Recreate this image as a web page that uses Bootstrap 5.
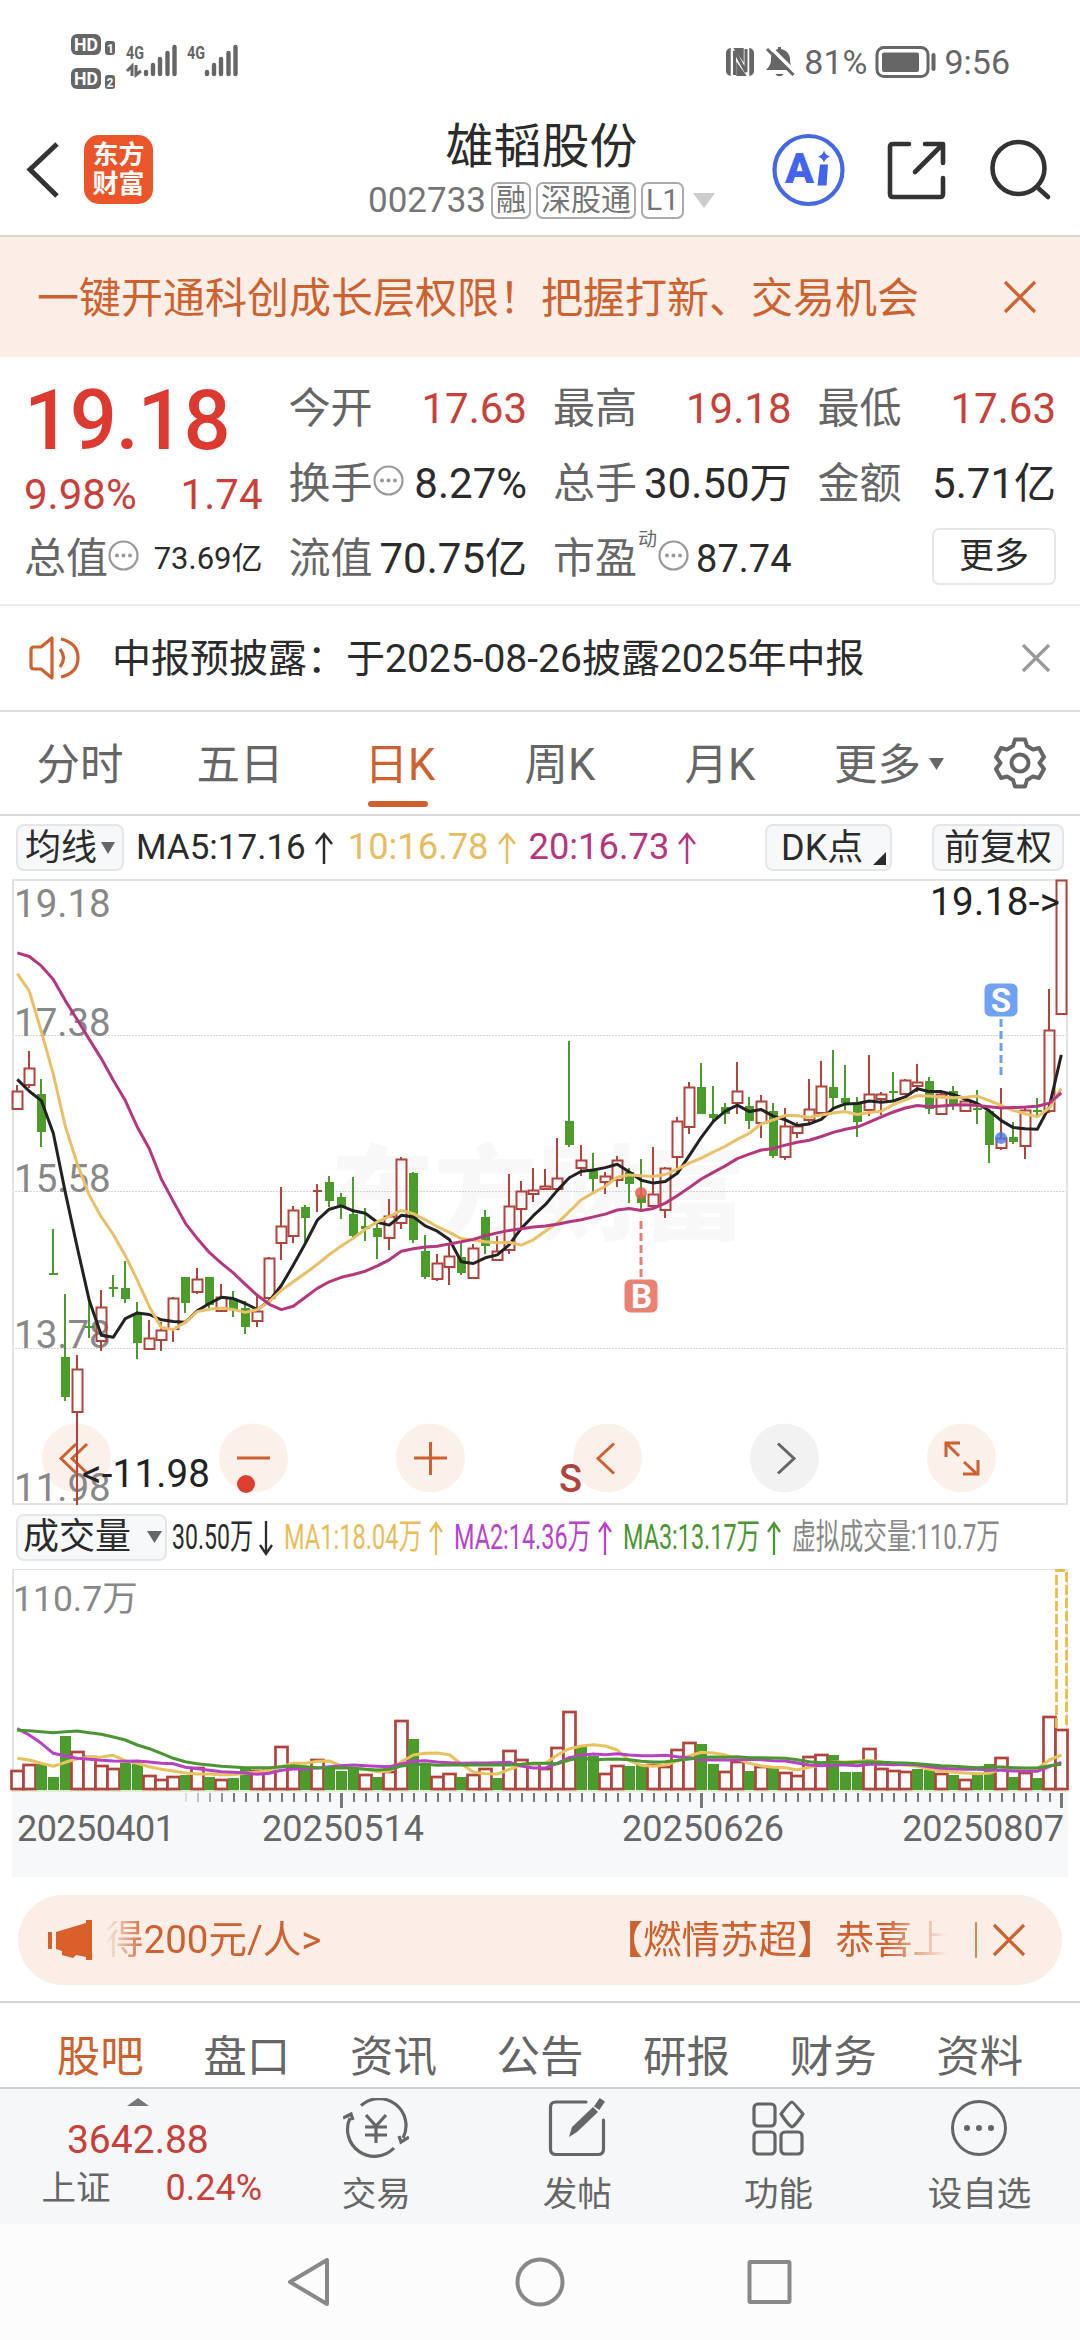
<!DOCTYPE html>
<html lang="zh-CN">
<head>
<meta charset="utf-8">
<meta name="viewport" content="width=device-width, initial-scale=1">
<title>雄韬股份 002733</title>
<link rel="stylesheet" href="https://cdn.jsdelivr.net/npm/bootstrap@5.3.0/dist/css/bootstrap.min.css">
<style>
  :root{--up:#c8403a;--brand:#cd6230;--ink:#2b2b2b;--mute:#666;--soft:#fbeee6}
  html,body{margin:0;background:#fff;overflow-x:hidden}
  body{width:1080px;height:2340px;overflow:hidden;font-family:Roboto,"Noto Sans CJK SC",sans-serif;color:var(--ink);line-height:1;font-size:42px}
  svg{display:block;flex:none}
  svg text{font-family:Roboto,"Noto Sans CJK SC",sans-serif}
  .c-up{color:var(--up)} .c-brand{color:var(--brand)} .c-mute{color:var(--mute)}
  .status-row{height:115px;padding:8px 70px 0 70px;color:#666;font-size:34px}
  .head-row{height:122px;border-bottom:2px solid #d6d6d9;padding-bottom:11px}
  .back-ico{margin-left:26px}
  .app-logo{width:69px;height:69px;border-radius:15px;background:#ea5529;color:#fff;font-size:26px;font-weight:700;line-height:29px}
  .title-box{padding-left:160px}
  .stock-name{font-size:48px;line-height:56px}
  .code-line{font-size:35px;color:#757575;height:40px;margin-top:5px;gap:5px}
  .tag-box{border:2px solid #aaa;border-radius:7px;font-size:30px;height:37px;padding:0 3px;color:#757575}
  .head-icons{margin-right:18px}
  .promo{height:120px;background:var(--soft);padding:0 43px 0 37px}
  .promo span{padding-top:4px}
  .quote{height:249px;padding:14px 24px 0;gap:26px;border-bottom:2px solid #ececec}
  .q-col{width:238.6px}
  .q-cell{height:75px}
  .q-price{height:98px;font-size:83px;font-weight:500;letter-spacing:-1.300px;color:#dc3a30}
  .q-chg{height:52px}
  .info-dot{width:31px;height:31px;margin-bottom:6px}
  .more-btn{width:124px;height:57px;margin-bottom:5px;border:2px solid #e6e6e6;border-radius:7px;font-size:35px;color:var(--ink);background:#fff}
  .dyn{font-size:19px;align-self:flex-start;margin:9px 1px 0 1px}
  .fs-cap{font-size:31px} .fs-pe{font-size:38px}
  .notice{height:106px;padding:0 29px 0 28px;border-bottom:2px solid #dcdcdc;font-size:39px}
  .notice span{margin-left:30px;padding-top:2px}
  .period{height:104px;border-bottom:2px solid #dadada;font-size:43.5px;color:var(--mute)}
  .period-item{width:160px;height:100%;position:relative;padding-top:6px}
  .period-item.on{color:var(--brand)}
  .period-item.on::after{content:"";position:absolute;left:48px;bottom:7px;width:60px;height:6px;border-radius:3px;background:var(--brand)}
  .period-item.wide{width:194px;padding-left:34px}
  .legend-row{height:63px;padding:0 16px;font-size:35px}
  .ma-b{font-size:36.300px;margin-left:14px;color:#e8bd62}
  .ma-c{font-size:36.300px;margin-left:12px;color:#b5387f}
  .chip{background:#f7f8fa;border:2px solid #e4e6ea;border-radius:8px;height:47px;font-size:36px;color:var(--ink)}
  .chip-ma{width:108px} .chip-dk{width:127px;padding-left:14px} .chip-fq{width:132px;margin-left:40px} .chip-vol{width:151px;padding-left:5px}
  .vol-head{height:64px;padding-left:16px}
  .ad-wrap{height:126px;padding:18px 18px 0;border-bottom:2px solid #d4d4d6}
  .ad{height:90px;border-radius:45px;background:var(--soft);color:var(--brand);font-size:38.5px;padding:0 36px 0 29px}
  .ticker{width:852px;margin-left:12px;white-space:nowrap;-webkit-mask-image:linear-gradient(90deg,transparent 0,#000 42px,#000 780px,transparent 842px);mask-image:linear-gradient(90deg,transparent 0,#000 42px,#000 780px,transparent 842px);overflow:hidden}
  .ticker span+span{margin-left:283px}
  .info-tabs{height:86px;padding:33px 27px 0;font-size:43.5px;color:var(--mute);border-bottom:2px solid #cfd0d2}
  .dock{height:135px;background:#f6f7f9;color:var(--mute);font-size:34.5px}
  .dock-index{width:276px;padding-top:9px}
  .idx-val{font-size:39px;margin-top:15px}
  .idx-sub{margin:10px 0 0 28px;gap:55px}
  .idx-sub .c-up{font-size:36px}
  .dock-item{width:201.3px;padding-top:9px;gap:19px}
  .sysnav{height:116px;background:#fcfcfc}
</style>
<script src="https://cdn.jsdelivr.net/npm/bootstrap@5.3.0/dist/js/bootstrap.bundle.min.js"></script>
</head>
<body class="d-flex flex-column">

<header>
  <div class="status-row d-flex align-items-center justify-content-between">
    <svg width="170" height="60" viewBox="70 32 170 60" fill="#666">
      <rect x="71" y="34" width="30" height="21" rx="6"/><rect x="105" y="41" width="10" height="14" rx="3"/>
      <rect x="71" y="68" width="30" height="21" rx="6"/><rect x="105" y="75" width="10" height="14" rx="3"/>
      <g fill="#fff" font-weight="700"><text x="74" y="51" font-size="18" textLength="24" lengthAdjust="spacingAndGlyphs">HD</text><text x="74" y="85" font-size="18" textLength="24" lengthAdjust="spacingAndGlyphs">HD</text><text x="107" y="53" font-size="12">1</text><text x="106.500" y="87" font-size="12">2</text></g>
      <g font-weight="700" font-size="19"><text x="126" y="59" textLength="18" lengthAdjust="spacingAndGlyphs">4G</text><text x="187" y="59" textLength="18" lengthAdjust="spacingAndGlyphs">4G</text></g>
      <path d="M127 71l5-5v10M136 65v10l5-4" fill="none" stroke="#666" stroke-width="3"/>
      <g stroke="#666" stroke-width="4.400" stroke-linecap="round"><path d="M146 72v2M153 65v9M160 59v15M167.500 53v21M174.500 47v27M207 72v2M214 65v9M221 59v15M228.500 53v21M235.500 47v27"/></g>
    </svg>
    <div class="d-flex align-items-center">
      <svg width="79" height="32" viewBox="726 45 79 32">
        <rect x="727" y="47" width="28" height="28" rx="5" fill="#666"/>
        <path d="M734.500 76V52l13 18V46" fill="none" stroke="#fff" stroke-width="5.500"/><path d="M735.500 74V50l11.500 21V48" fill="none" stroke="#666" stroke-width="3"/>
        <path d="M767 69c4-4 5-7 5-11 0-6 3-9 7-10v-2h3v2c5 1 9 5 9 10 0 5 1 7 4 11zM776.500 73h8c-1 3-7 3-8 0z" fill="#666"/>
        <path d="M769 44l27 27" stroke="#fff" stroke-width="3.500"/><path d="M768 48l26.500 26" stroke="#666" stroke-width="3"/>
      </svg>
      <span>81%</span>
      <svg class="ms-2" width="61" height="34" viewBox="873 44 61 34"><rect x="875" y="46.500" width="51" height="29" rx="7" fill="none" stroke="#666" stroke-width="3"/><rect x="880" y="51.500" width="37" height="19.500" rx="2" fill="#666"/><path d="M931.500 54v14" stroke="#666" stroke-width="4" stroke-linecap="round"/></svg>
      <span class="ms-2">9:56</span>
    </div>
  </div>

  <div class="head-row d-flex align-items-center">
    <svg class="back-ico" width="34" height="56" viewBox="0 0 34 56"><path d="M31 2L4 27.500 31 54" fill="none" stroke="#333" stroke-width="5"/></svg>
    <div class="app-logo d-flex flex-column align-items-center justify-content-center ms-4"><span>东方</span><span>财富</span></div>
    <div class="title-box flex-grow-1 d-flex flex-column align-items-center">
      <div class="stock-name">雄韬股份</div>
      <div class="code-line d-flex align-items-center"><span>002733</span>
        <span class="tag-box d-flex align-items-center">融</span><span class="tag-box d-flex align-items-center">深股通</span><span class="tag-box d-flex align-items-center">L1</span>
        <svg class="ms-1" width="22" height="15"><path d="M0 0h22L11 15z" fill="#ccc"/></svg></div>
    </div>
    <svg class="head-icons" width="292" height="76" viewBox="770 131 292 76" fill="none" stroke="#333" stroke-width="4.600" stroke-linecap="round" stroke-linejoin="round">
      <circle cx="808.500" cy="169" r="34" stroke="#4669e3" stroke-width="4.200"/>
      <text x="785" y="182" font-size="42" font-weight="900" fill="#4463ef" stroke="none" textLength="29" lengthAdjust="spacingAndGlyphs">A</text>
      <path d="M820 163.500h8l-1.500 21h-9z" fill="#4463ef" stroke="none"/><path d="M824 149.500q1.500 5 6 6-4.500 1.500-6 6-1.500-4.500-6-6 4.500-1 6-6z" fill="#4463ef" stroke="none"/>
      <path d="M909 143h-16q-3 0-3 3v47q0 3 3 3h47q3 0 3-3v-16M925 143h18v19M942 144l-27 27"/>
      <circle cx="1018.500" cy="167" r="26"/><path d="M1037 186l11 10"/>
    </svg>
  </div>
</header>

<div class="promo d-flex align-items-center justify-content-between c-brand">
  <span>一键开通科创成长层权限！把握打新、交易机会</span>
  <svg width="34" height="34"><path d="M2 2l30 30M32 2L2 32" stroke="#cd6230" stroke-width="3.200"/></svg>
</div>

<section class="quote d-flex">
  <div class="q-col">
    <div class="q-price d-flex align-items-center">19.18</div>
    <div class="q-chg d-flex align-items-center justify-content-between c-up"><span>9.98%</span><span>1.74</span></div>
    <div class="q-cell d-flex align-items-center"><span class="c-mute">总值</span><svg class="info-dot"><use href="#dots"/></svg><span class="ms-auto fs-cap">73.69亿</span></div>
  </div>
  <div class="q-col">
    <div class="q-cell d-flex align-items-center justify-content-between"><span class="c-mute">今开</span><span class="c-up">17.63</span></div>
    <div class="q-cell d-flex align-items-center"><span class="c-mute">换手</span><svg class="info-dot"><use href="#dots"/></svg><span class="ms-auto">8.27%</span></div>
    <div class="q-cell d-flex align-items-center justify-content-between"><span class="c-mute">流值</span><span>70.75亿</span></div>
  </div>
  <div class="q-col">
    <div class="q-cell d-flex align-items-center justify-content-between"><span class="c-mute">最高</span><span class="c-up">19.18</span></div>
    <div class="q-cell d-flex align-items-center justify-content-between"><span class="c-mute">总手</span><span>30.50万</span></div>
    <div class="q-cell d-flex align-items-center"><span class="c-mute">市盈</span><span class="c-mute dyn">动</span><svg class="info-dot"><use href="#dots"/></svg><span class="ms-auto fs-pe">87.74</span></div>
  </div>
  <div class="q-col">
    <div class="q-cell d-flex align-items-center justify-content-between"><span class="c-mute">最低</span><span class="c-up">17.63</span></div>
    <div class="q-cell d-flex align-items-center justify-content-between"><span class="c-mute">金额</span><span>5.71亿</span></div>
    <div class="q-cell d-flex align-items-center justify-content-end"><span class="more-btn d-flex align-items-center justify-content-center">更多</span></div>
  </div>
</section>

<div class="notice d-flex align-items-center">
  <svg width="54" height="46" viewBox="0 0 54 46" fill="none" stroke="#cd6230" stroke-width="3.200" stroke-linejoin="round"><path d="M24 3v40L13 34H6q-3 0-3-3V15q0-3 3-3h7zM32 14q7 9 0 18M33 4q17 4 17 19t-17 19"/></svg>
  <span>中报预披露：于2025-08-26披露2025年中报</span>
  <svg class="ms-auto" width="30" height="30"><path d="M2 2l26 26M28 2L2 28" stroke="#999" stroke-width="3.200"/></svg>
</div>

<nav class="period d-flex align-items-center">
  <div class="period-item d-flex align-items-center justify-content-center">分时</div>
  <div class="period-item d-flex align-items-center justify-content-center">五日</div>
  <div class="period-item on d-flex align-items-center justify-content-center">日K</div>
  <div class="period-item d-flex align-items-center justify-content-center">周K</div>
  <div class="period-item d-flex align-items-center justify-content-center">月K</div>
  <div class="period-item wide d-flex align-items-center">更多<svg class="ms-2 mb-1" width="15" height="12"><path d="M0 0h15L7.500 12z" fill="#666"/></svg></div>
  <svg width="52" height="52" viewBox="-26 -26 52 52" fill="none" stroke="#666" stroke-width="4" stroke-linejoin="round"><path d="M-5-23.500H5L7-17 13-13.500 19-15 24-6 19.500 0 24 6 19 15 13 13.500 7 17 5 23.500H-5L-7 17-13 13.500-19 15-24 6-19.500 0-24-6-19-15-13-13.500-7-17z"/><circle r="8.500"/></svg>
</nav>

<div class="legend-row d-flex align-items-center">
  <div class="chip chip-ma d-flex align-items-center justify-content-center">均线<svg class="ms-1" width="14" height="12"><path d="M0 0h14L7 12z" fill="#666"/></svg></div>
  <svg width="560" height="50" viewBox="124 823 560 50" class="d-none"></svg>
  <span style="margin-left:12px">MA5:17.16</span><svg class="ms-2" width="20" height="34" fill="none" stroke="#2b2b2b" stroke-width="2.500"><path d="M10 33V3M2 13l8-10 8 10"/></svg>
  <span class="ma-b">10:16.78</span><svg class="ms-2" width="20" height="34" fill="none" stroke="#e8bd62" stroke-width="2.500"><path d="M10 33V3M2 13l8-10 8 10"/></svg>
  <span class="ma-c">20:16.73</span><svg class="ms-2" width="20" height="34" fill="none" stroke="#b5387f" stroke-width="2.500"><path d="M10 33V3M2 13l8-10 8 10"/></svg>
  <div class="chip chip-dk d-flex align-items-center ms-auto">DK点<svg class="ms-auto me-1 align-self-end mb-1" width="13" height="13"><path d="M13 0v13H0z" fill="#2b2b2b"/></svg></div>
  <div class="chip chip-fq d-flex align-items-center justify-content-center">前复权</div>
</div>

<svg id="kline" width="1080" height="626" viewBox="0 879 1080 626"></svg>

<div class="vol-head d-flex align-items-center">
  <div class="chip chip-vol d-flex align-items-center">成交量<svg class="ms-3" width="15" height="12"><path d="M0 0h15L7.500 12z" fill="#666"/></svg></div>
  <svg width="890" height="60" viewBox="167 1506 890 60" font-size="35">
    <text x="172" y="1548" fill="#2b2b2b" textLength="81" lengthAdjust="spacingAndGlyphs">30.50万</text>
    <text x="284" y="1548" fill="#e8bd5a" textLength="138" lengthAdjust="spacingAndGlyphs">MA1:18.04万</text>
    <text x="454" y="1548" fill="#b743cc" textLength="137" lengthAdjust="spacingAndGlyphs">MA2:14.36万</text>
    <text x="623" y="1548" fill="#4a9633" textLength="137" lengthAdjust="spacingAndGlyphs">MA3:13.17万</text>
    <text x="792" y="1548" fill="#888" textLength="208" lengthAdjust="spacingAndGlyphs">虚拟成交量:110.7万</text>
    <g fill="none" stroke-width="2.300"><path d="M266 1520v33M260 1544l6 9 6-9" stroke="#2b2b2b"/><path d="M436 1554v-32M430 1531l6-9 6 9" stroke="#e8bd5a"/><path d="M605 1554v-32M599 1531l6-9 6 9" stroke="#b743cc"/><path d="M774 1554v-32M768 1531l6-9 6 9" stroke="#4a9633"/></g>
  </svg>
</div>

<svg id="volume" width="1080" height="308" viewBox="0 1569 1080 308"></svg>

<div class="ad-wrap">
  <div class="ad d-flex align-items-center">
    <svg width="46" height="40" fill="#da5f28"><path d="M1 12h4v17H1zM9 12L39 3V0h6v40h-6v-3l-10-2-3 3-11-3v-4l-6-2z"/></svg>
    <div class="ticker d-flex"><span>得200元/人&gt;</span><span>【燃情苏超】恭喜上海</span></div>
    <svg class="ms-auto" width="52" height="38"><path d="M2 1v36" stroke="#cd6230" stroke-width="1.500"/><path d="M20 4l30 30M50 4L20 34" stroke="#cd6230" stroke-width="3.200"/></svg>
  </div>
</div>

<nav class="info-tabs d-flex text-center">
  <div class="flex-fill c-brand">股吧</div><div class="flex-fill">盘口</div><div class="flex-fill">资讯</div><div class="flex-fill">公告</div><div class="flex-fill">研报</div><div class="flex-fill">财务</div><div class="flex-fill">资料</div>
</nav>

<footer>
  <div class="dock d-flex">
    <div class="dock-index d-flex flex-column align-items-center">
      <svg width="22" height="8"><path d="M0 8L11 0l11 8z" fill="#777"/></svg>
      <div class="c-up idx-val">3642.88</div>
      <div class="idx-sub d-flex align-items-center"><span>上证</span><span class="c-up">0.24%</span></div>
    </div>
    <div class="dock-item d-flex flex-column align-items-center">
      <svg width="66" height="60" viewBox="-33 -30 66 60" fill="none" stroke="#666" stroke-width="3.200"><path d="M-15-22.500A27 27 0 0 1 27 10M18 20A27 27 0 0 1-26-10M-33-10l8-4 2 6M33 9l-8 5-2-6"/><path d="M-10-13L0-2 10-13M0-2v17M-11-1h22M-11 7h22"/></svg>
      <span>交易</span></div>
    <div class="dock-item d-flex flex-column align-items-center">
      <svg width="58" height="60" viewBox="0 0 58 60" fill="none" stroke="#666" stroke-width="3.200" stroke-linecap="round"><path d="M38 4H8Q2.500 4 2.500 9v42q0 5.500 5.500 5.500h42q5.500 0 5.500-5.500V22"/><path d="M21 39l3-10L45 9l5 5-21 20z" fill="#666" stroke="none"/><path d="M50.500 7.500l2-3" stroke-width="6.500" stroke-linecap="square"/></svg>
      <span>发帖</span></div>
    <div class="dock-item d-flex flex-column align-items-center">
      <svg width="54" height="60" viewBox="0 0 54 60" fill="none" stroke="#666" stroke-width="3.200" stroke-linejoin="round"><rect x="3" y="6" width="21" height="22" rx="4"/><rect x="3" y="34" width="21" height="22" rx="4"/><rect x="30" y="34" width="21" height="22" rx="4"/><path d="M41 4q1 0 11 12-8 12-11 13-3-1-11-13Q39 4 41 4z"/></svg>
      <span>功能</span></div>
    <div class="dock-item d-flex flex-column align-items-center">
      <svg width="60" height="60" fill="none" stroke="#666" stroke-width="3"><circle cx="30" cy="30" r="26.500"/><g fill="#666" stroke="none"><circle cx="18" cy="30" r="3"/><circle cx="30" cy="30" r="3"/><circle cx="42" cy="30" r="3"/></g></svg>
      <span>设自选</span></div>
  </div>
  <div class="sysnav d-flex align-items-center justify-content-center">
    <svg width="510" height="52" viewBox="285 2256 510 52" fill="none" stroke="#888" stroke-width="4" stroke-linejoin="round"><path d="M327 2260v44L290 2282z"/><circle cx="540" cy="2282" r="22.500"/><rect x="749.500" y="2262" width="40" height="40" rx="1"/></svg>
  </div>
</footer>

<svg width="0" height="0" class="position-absolute"><defs>
  <symbol id="dots" viewBox="0 0 31 31"><circle cx="15.500" cy="15.500" r="14" fill="none" stroke="#999" stroke-width="2.200"/><g fill="#999"><circle cx="9" cy="15.500" r="2"/><circle cx="15.500" cy="15.500" r="2"/><circle cx="22" cy="15.500" r="2"/></g></symbol>
</defs></svg>

<script>
// One entry per trading day: direction, high, body top, body bottom, low (chart units from the top), volume top
const days = `r527,541,585,585,210 r443,486,527,535,192 g512,550,641,678,193 g880,988,990,992,232 g1040,1192,1291,1302,109 r1188,1222,1328,1556,153 g1050,1116,1120,1146,167 r1029,1070,1153,1178,194 g993,1021,1025,1046,205 g958,1024,1050,1062,190 g1058,1087,1158,1198,192
r1102,1146,1174,1176,224 r1108,1128,1151,1178,237 r1046,1049,1125,1157,229 g996,998,1060,1085,224 r976,1003,1034,1038,200 g998,998,1065,1074,230 r1014,1046,1080,1082,236 g1031,1050,1077,1095,234 g1056,1074,1120,1136,200 r1044,1080,1105,1120,209 r948,950,1048,1056,209
r777,873,913,955,138 r823,833,896,914,197 g821,826,853,912,198 r769,783,787,838,177 g750,764,811,825,200 g791,800,826,856,213 g752,843,897,898,207 g827,872,879,910,223 g867,877,899,953,232 r806,847,901,931,212 r704,707,865,880,60
g740,742,906,915,118 g895,934,996,1001,195 r942,964,1002,1007,227 r915,945,972,1017,219 g913,949,988,993,231 r916,927,999,1000,222 g832,850,921,942,204 r897,933,956,958,234 r746,823,932,940,150 r763,786,830,878,176 r731,784,794,814,190
r733,773,782,784,203 r657,754,781,784,140 g420,616,674,678,33 r674,710,731,750,137 g693,738,758,792,167 r741,750,765,794,219 r701,710,760,776,196 g730,740,769,815,198 g708,797,815,834,196 r679,793,824,829,192 r728,731,832,853,197
r605,615,704,740,147 r520,531,629,648,125 g474,532,598,598,133 g529,599,607,617,192 g572,581,598,622,212 r471,541,572,598,183 g555,577,615,635,212 r551,567,621,657,198 g572,591,700,706,205 r583,627,703,710,216 r618,628,645,657,225
r512,585,613,620,167 r468,529,596,598,162 g440,532,559,587,166 g478,559,570,587,215 g555,569,618,654,215 r454,550,588,603,144 r545,548,561,600,205 g495,541,545,564,209 r512,514,548,552,212 r475,519,529,543,206 g508,517,586,598,210
r540,548,598,600,219 g530,541,575,587,226 r555,565,590,594,236 g540,583,587,622,225 g585,590,673,718,191 r534,657,680,686,170 g617,654,667,671,232 r580,587,677,708,217 g559,588,592,604,234 r291,392,591,596,48 r24,24,353,353,88`
 .split(/\s+/).map(s => ({up: s[0]==='r', v: s.slice(1).split(',').map(Number)}));
// Days whose volume bar takes the other colour than the candle
const volFlip = new Set([6,8,29,39,40,46,47,59,73,75]);
const avg = {
 ma5:[513,542,565,645,790,925,1055,1140,1145,1099,1085,1089,1102,1106,1108,1080,1062,1047,1050,1062,1077,1056,1018,968,915,858,831,823,835,841,863,870,846,850,872,885,905,960,964,950,943,918,878,847,820,785,754,738,735,729,721,740,760,767,763,743,700,655,616,591,576,592,587,603,612,626,622,611,584,573,572,566,569,566,556,536,543,543,550,561,572,590,614,631,634,635,580,453],
 ma10:[254,297,395,500,628,720,797,850,893,945,1005,1070,1121,1126,1108,1082,1076,1073,1077,1084,1077,1057,1030,1009,988,966,942,921,902,880,862,849,834,842,857,874,888,903,907,911,913,912,919,906,885,865,837,808,791,775,753,747,749,751,746,733,718,706,691,677,660,645,622,612,601,602,606,600,595,592,599,594,591,575,563,553,554,557,558,557,554,565,577,589,597,605,583,535],
 ma20:[203,212,235,268,320,367,415,462,515,565,630,683,757,812,865,903,937,963,987,1015,1042,1064,1077,1069,1047,1025,1009,998,991,983,970,955,934,928,924,922,916,911,905,896,889,883,879,875,872,868,862,857,850,843,833,829,834,829,816,798,778,757,741,725,707,696,686,682,674,667,662,653,643,635,630,618,605,593,583,577,580,578,576,575,577,580,583,582,581,579,571,546],
 v1:[175,180,190,199,187,176,172,171,166,182,190,200,208,213,219,222,222,224,224,220,216,212,200,190,190,184,183,197,204,208,215,214,185,165,160,159,164,192,216,221,222,208,196,191,190,165,146,138,134,138,150,182,196,199,195,183,168,157,159,165,177,190,198,202,203,210,202,195,185,186,184,181,186,192,196,199,208,213,217,219,221,220,208,206,207,206,180,165],
 v2:[86,105,130,160,168,175,178,181,183,184,183,186,190,191,202,206,211,215,217,219,223,220,211,207,206,204,200,197,195,197,199,200,192,184,182,186,188,190,189,189,188,187,198,204,204,190,173,166,162,164,161,165,167,167,166,170,173,179,180,180,180,178,179,182,183,189,195,197,195,195,197,193,193,194,193,195,200,205,207,208,208,210,211,213,214,214,200,187],
 v3:[91,92,95,98,95,93,98,103,111,120,135,146,160,175,185,191,195,199,201,203,203,203,200,197,200,203,204,203,205,208,210,208,198,194,193,196,195,195,195,195,195,195,193,190,190,191,180,173,180,178,177,179,184,186,185,181,177,172,171,172,170,173,173,174,175,179,185,188,186,188,187,185,187,188,189,191,194,197,199,201,203,201,201,203,204,204,197,193]};
const X = i => 17.3 + 12*i, Y = u => 870 + u/2.45, V = u => 1700 + u/3, R = Math.round;
const RED = '#b2443e', GREEN = '#4b9c2d';
const line = (a,f,c) => `<polyline fill="none" stroke="${c}" stroke-width="3" stroke-linejoin="round" points="${a.map((u,i)=>X(i)+','+f(u).toFixed(1)).join(' ')}"/>`;

let k = `<text x="330" y="1232" font-size="103" font-weight="900" fill="#f8f8f8" textLength="416" lengthAdjust="spacingAndGlyphs">东方财富</text>
<g stroke="#d4d4d4" stroke-width="1" stroke-dasharray="2 1"><path d="M12 1035.5H1067M12 1191.500H1067M12 1348.500H1067"/></g>
<path d="M12 880H1068M12 1504H1068M13 879V1505M1067 879V1505" stroke="#e3e3e3" stroke-width="2" fill="none"/>`;
const rounds = [76.5,253.5,430.5,607.5,784.5,961.5];
rounds.forEach((x,i) => k += `<circle cx="${x}" cy="1458" r="34.5" fill="${i===4?'#f2f2f2':'#fbf1ea'}"/>`);
k += `<g fill="none" stroke="#cd6230" stroke-width="3"><path d="M76 1444L61 1458.500 76 1473M87 1444L72 1458.500 87 1473M237 1458h33M414 1458h33M430.500 1442v33M614 1443.500L598 1458.500 614 1473.500M946 1457v-14h14M946 1443l13 13M964 1462l13 12M978 1460v14h-15"/><path d="M778 1443.500L794 1458.500 778 1473.500" stroke="#666"/></g>
<circle cx="246" cy="1484" r="9" fill="#dd4030"/>`;
k += '<g fill="#888" font-size="38.500">' + [['19.18',917],['17.38',1036],['15.58',1192],['13.78',1348],['11.98',1501]].map(t=>`<text x="14" y="${t[1]}">${t[0]}</text>`).join('') + '</g>';
let v = `<path d="M12 1790H1068V1877H12z" fill="#f7f8fa"/><path d="M13 1569V1790M12 1569H1068M1067 1569V1790" stroke="#e3e3e3" stroke-width="2" fill="none"/>
<path d="M12 1791H1068" stroke="#e0ecd6" stroke-width="2"/><text x="13" y="1611" font-size="35.500" fill="#888">110.7万</text>`;
let reds = '';
days.forEach((d,i) => {
  const [h,t,b,l,q] = d.v, x = R(X(i)), c = d.up ? RED : GREEN, T = R(Y(t)), B = R(Y(b)), H = R(Y(h)), L = R(Y(l));
  if (b - t < 6) k += `<path d="M${x} ${H}V${L}M${x-4} ${T+1}h9" stroke="${c}" stroke-width="2"/>`;
  else if (d.up) k += `<path d="M${x} ${H}V${T}M${x} ${B}V${L}" stroke="${c}" stroke-width="2"/><rect x="${x-4.5}" y="${T+.5}" width="10" height="${Math.max(1,B-T-.5)}" fill="none" stroke="${c}" stroke-width="2"/>`;
  else k += `<path d="M${x} ${H}V${L}" stroke="${c}" stroke-width="2"/><rect x="${x-4}" y="${T}" width="9" height="${B-T}" fill="${c}"/>`;
  const y = R(V(q));
  if (d.up !== volFlip.has(i)) v += `<rect x="${x-5.5}" y="${y+1}" width="12" height="${1788-y}" fill="#fff" stroke="${RED}" stroke-width="2.700"/>`;
  else v += `<rect x="${x-5}" y="${y}" width="11" height="${1790-y}" fill="${GREEN}"/>`;
});
k += line(avg.ma5,Y,'#222') + line(avg.ma10,Y,'#e9c067') + line(avg.ma20,Y,'#b5387f');
k += `<g fill="#222" font-size="38.500"><text x="930" y="915" textLength="130">19.18-&gt;</text><text x="82" y="1487" textLength="128">&lt;-11.98</text></g>
<text x="559" y="1492" font-size="38" font-weight="500" fill="#b2443e">S</text>
<path d="M1001 1019v57" stroke="#6f9fe8" stroke-width="3" stroke-dasharray="8 4"/><path d="M641 1221v56" stroke="#e88072" stroke-width="3" stroke-dasharray="8 4"/>
<circle cx="1001" cy="1138" r="6" fill="#4a7bea" opacity=".8"/><circle cx="641" cy="1193" r="6" fill="#e2604e" opacity=".85"/>
<rect x="984.500" y="983.500" width="33" height="33" rx="6" fill="#71a1f3"/><rect x="624.500" y="1279.500" width="33" height="33" rx="6" fill="#e98273"/>
<g fill="#fff" font-size="33" font-weight="700" text-anchor="middle"><text x="1001" y="1012">S</text><text x="641.500" y="1308">B</text></g>`;
v += line(avg.v1,V,'#e8c25c') + line(avg.v2,V,'#b743c4') + line(avg.v3,V,'#4a9633');
v += '<path d="M1056.500 1728V1570.500H1066.500V1728" fill="none" stroke="#e8bd4e" stroke-width="2.800" stroke-dasharray="10 3"/>';
for (let i=14;i<88;i++){ const big=[27,57,87].includes(i); v += `<path d="M${R(X(i))+(big?.5:1)} 1793V${big?1808:1802}" stroke="#777" stroke-width="${big?3:2}" opacity="${Math.min(1,(i-13)/5)}"/>`; }
v += '<g fill="#666" font-size="36"><text x="17" y="1841" textLength="158">20250401</text><text x="343" y="1841" text-anchor="middle">20250514</text><text x="703" y="1841" text-anchor="middle">20250626</text><text x="1064" y="1841" text-anchor="end">20250807</text></g>';
document.getElementById('kline').innerHTML = k;
document.getElementById('volume').innerHTML = v;
</script>
</body>
</html>
